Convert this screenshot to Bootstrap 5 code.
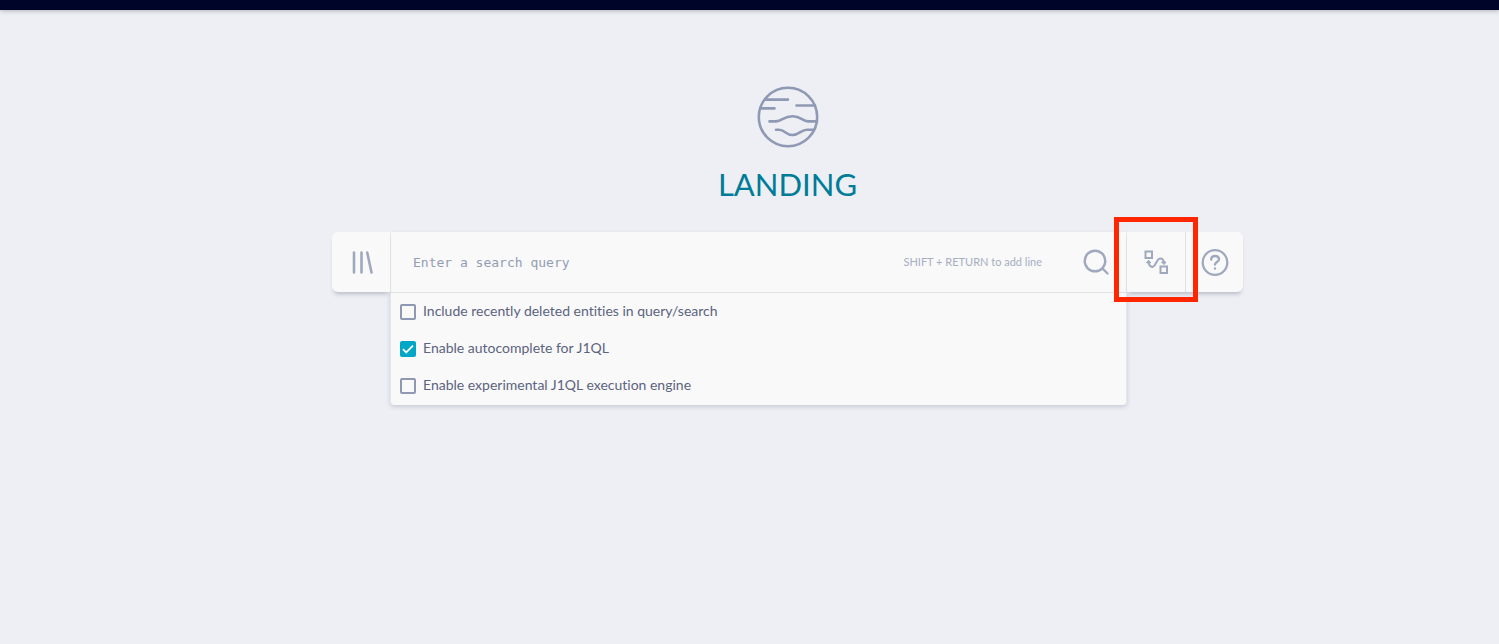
<!DOCTYPE html>
<html lang="en">
<head>
<meta charset="utf-8">
<meta name="viewport" content="width=device-width, initial-scale=1">
<title>Landing</title>
<link href="https://cdn.jsdelivr.net/npm/bootstrap@5.3.0/dist/css/bootstrap.min.css" rel="stylesheet">
<style>
  body { background: #eeeff5; font-family: Lato, sans-serif; font-variant-ligatures: none; color: #5b6380; }
  .topbar { height: 10px; background: #000428; box-shadow: 0 1px 4px rgba(0,0,0,.25); }
  .landing { padding: 76px 16px 16px 92px; }
  .landing h1 { color: #007c98; font-size: 31px; line-height: 40px; margin: 16px 0 28px; }
  .landing svg { fill: none; stroke: #a0a8be; stroke-width: 2; stroke-linecap: round; stroke-linejoin: round; display: block; }
  .landing .planet { stroke: #8f99b3; }
  .search { max-width: 911px; }
  .side { height: 60px; background: #f9f9f9; box-shadow: 0 4px 4px -2px rgba(60,65,90,.3); position: relative; z-index: 1; }
  .tool { width: 58px; height: 60px; padding: 0; border: 0; background: none; display: flex; align-items: center; justify-content: center; }
  .help { border-left: 1px solid #e0e1e4; }
  .center { background: #f9f9f9; border-radius: 0 0 4px 4px; box-shadow: 0 2px 4px rgba(60,65,90,.2); border: 1px solid #e6e7ea; border-width: 0 1px; }
  .query { height: 61px; border-bottom: 1px solid #e0e1e4; padding: 0 17px 0 22px; }
  .query input { border: 0; background: none; outline: 0; padding: 0; font: 13px "DejaVu Sans Mono", monospace; color: #5b6380; min-width: 0; }
  .query input::placeholder { color: #939cb4; opacity: 1; }
  .hint { font-size: 11px; color: #a7aec3; margin-right: 41px; }
  .options { padding-bottom: 1px; }
  .option { height: 37px; padding: 0 9px 2px; gap: 7px; font-size: 14px; line-height: 20px; }
  .option .form-check-input { width: 16px; height: 16px; margin: 2px 0 0; border: 2px solid #8f99b3; border-radius: 2px; background-color: transparent; flex: none; }
  .option .form-check-input:checked { background-color: #00a7c6; border-color: #00a7c6; background-size: 12px; background-position: center; background-image: url("data:image/svg+xml,%3csvg xmlns='http://www.w3.org/2000/svg' viewBox='0 0 12 12'%3e%3cpath fill='none' stroke='%23fff' stroke-width='1.8' d='M1 6.200L4.200 9.400L11 2.600'/%3e%3c/svg%3e"); }
  .highlight { position: absolute; inset: -15px -13px -10px -13px; border: 5px solid #ff2600; pointer-events: none; z-index: 2; }
</style>
</head>
<body>
<header class="topbar"></header>
<main class="landing d-flex flex-column align-items-center">
  <svg class="planet" width="62" height="62" viewBox="0 0 62 62" aria-hidden="true">
    <circle cx="31" cy="31" r="29.2" stroke-width="2.6"/>
    <path stroke-width="2.6" d="M8 13.6H31M4 22.4H17.500M39.500 19.500H58M12.500 35.400H19C25 35.400 26.500 30.200 35.500 30.200S45 35.400 51 35.400H60M19 43.700H22C28 43.700 28.500 49 35.500 49S44 43.700 50 43.700H57"/>
  </svg>
  <h1 class="fw-normal">LANDING</h1>
  <div class="search w-100 d-flex align-items-start">
    <div class="side rounded-start">
      <button type="button" class="tool" aria-label="Query library">
        <svg width="24" height="24" viewBox="0 0 24 24"><path stroke-width="2.6" d="M5 2.500V22.500M12.500 2.500V22.500M18.200 2.500L22.500 22.500"/></svg>
      </button>
    </div>
    <div class="center flex-grow-1">
      <div class="query d-flex align-items-center">
        <input class="flex-grow-1" type="text" placeholder="Enter a search query" aria-label="Search query">
        <span class="hint text-nowrap">SHIFT + RETURN to add line</span>
        <button type="button" class="border-0 p-0 bg-transparent" aria-label="Search">
          <svg width="26" height="26" viewBox="0 0 26 26"><circle cx="12" cy="12" r="10.300" stroke-width="2.4"/><path stroke-width="2.4" d="M19.500 19.500L24.500 24.500"/></svg>
        </button>
      </div>
      <div class="options">
        <label class="option d-flex align-items-center"><input class="form-check-input" type="checkbox">Include recently deleted entities in query/search</label>
        <label class="option d-flex align-items-center"><input class="form-check-input" type="checkbox" checked>Enable autocomplete for J1QL</label>
        <label class="option d-flex align-items-center"><input class="form-check-input" type="checkbox">Enable experimental J1QL execution engine</label>
      </div>
    </div>
    <div class="side rounded-end d-flex">
      <div class="position-relative">
        <button type="button" class="tool" aria-label="Visual query builder">
          <svg width="26" height="26" viewBox="0 0 26 26"><path stroke-linejoin="miter" d="M2.500 2.500H9V9H2.500ZM17.500 17.500H24V24H17.500Z"/><path d="M5.500 13.500C6.200 16.500 8 18.200 10 17.800C13 17 13.500 9.800 17 9.400C19 9.200 20.500 10.500 21 13.500"/><path fill="#a0a8be" stroke-width="1" d="M3.700 13.500L5.500 11.200L7.500 13.500ZM18.800 13H23L21.200 15.300Z"/></svg>
        </button>
        <div class="highlight"></div>
      </div>
      <button type="button" class="tool help" aria-label="Help">
        <svg width="28" height="28" viewBox="0 0 28 28"><circle cx="14" cy="14.500" r="12.300" stroke-width="2.3"/><path stroke-width="2.4" d="M10.200 11.500C10.200 6.800 18 6.800 18 11.500C18 14 14 14 14 16.500M14 20.500V20.600"/></svg>
      </button>
    </div>
  </div>
</main>
<script src="https://cdn.jsdelivr.net/npm/bootstrap@5.3.0/dist/js/bootstrap.bundle.min.js"></script>
</body>
</html>
